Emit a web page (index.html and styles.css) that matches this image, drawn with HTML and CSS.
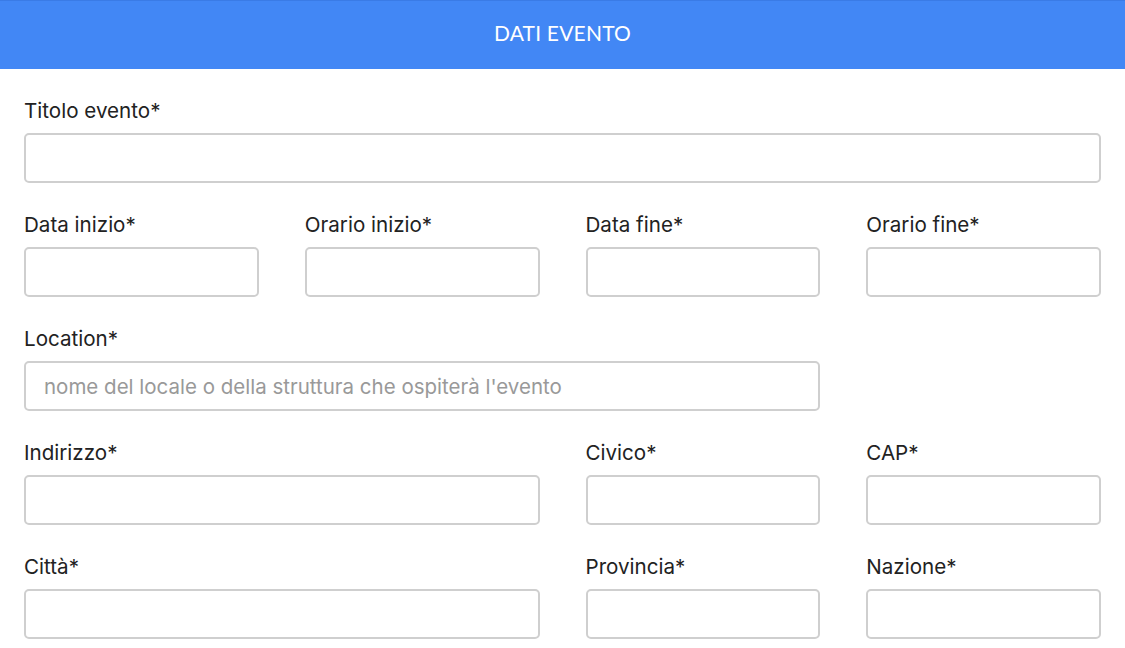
FILE: index.html
```html
<!DOCTYPE html>
<html lang="it">
<head>
<meta charset="utf-8">
<title>Dati evento</title>
<link rel="stylesheet" href="styles.css">
</head>
<body>
<header class="bar">DATI EVENTO</header>
<form class="form">
  <div class="field span4">
    <label class="label">Titolo evento*</label>
    <input class="input" type="text">
  </div>
  <div class="field">
    <label class="label">Data inizio*</label>
    <input class="input" type="text">
  </div>
  <div class="field">
    <label class="label">Orario inizio*</label>
    <input class="input" type="text">
  </div>
  <div class="field">
    <label class="label">Data fine*</label>
    <input class="input" type="text">
  </div>
  <div class="field">
    <label class="label">Orario fine*</label>
    <input class="input" type="text">
  </div>
  <div class="field span3">
    <label class="label">Location*</label>
    <input class="input" type="text" placeholder="nome del locale o della struttura che ospiterà l'evento">
  </div>
  <div class="field span2 rowstart">
    <label class="label">Indirizzo*</label>
    <input class="input" type="text">
  </div>
  <div class="field">
    <label class="label">Civico*</label>
    <input class="input" type="text">
  </div>
  <div class="field">
    <label class="label">CAP*</label>
    <input class="input" type="text">
  </div>
  <div class="field span2">
    <label class="label">Città*</label>
    <input class="input" type="text">
  </div>
  <div class="field">
    <label class="label">Provincia*</label>
    <input class="input" type="text">
  </div>
  <div class="field">
    <label class="label">Nazione*</label>
    <input class="input" type="text">
  </div>
</form>
</body>
</html>
```
FILE: styles.css
```css
html, body {
  margin: 0;
  padding: 0;
  background: #ffffff;
}
body {
  font-family: Inter, "Open Sans", "Liberation Sans", sans-serif;
  color: #222222;
}
.bar {
  box-sizing: border-box;
  height: 69px;
  padding-bottom: 5px;
  background: #4287f5;
  border-top: 1px solid #3a7be6;
  color: #ffffff;
  font-family: Lato, "Liberation Sans", sans-serif;
  font-size: 21px;
  display: flex;
  align-items: center;
  justify-content: center;
  letter-spacing: 0.2px;
}
.form {
  display: grid;
  grid-template-columns: repeat(4, 1fr);
  column-gap: 46px;
  row-gap: 30px;
  padding: 30px 24px 0 24px;
}
.field {
  display: flex;
  flex-direction: column;
  min-width: 0;
}
.span4 { grid-column: span 4; }
.span3 { grid-column: span 3; }
.span2 { grid-column: span 2; }
.rowstart { grid-column: 1 / span 2; }
.label {
  font-size: 20.6px;
  line-height: 24px;
  margin-bottom: 10px;
  color: #222222;
}
.input {
  box-sizing: border-box;
  height: 50px;
  width: 100%;
  border: 2px solid #cfcfcf;
  border-radius: 5px;
  padding: 0 18px;
  font-family: Inter, "Open Sans", sans-serif;
  font-size: 20.5px;
  color: #222;
  background: #fff;
  outline: none;
}
.input::placeholder {
  color: #999999;
  font-weight: 400;
}
```
